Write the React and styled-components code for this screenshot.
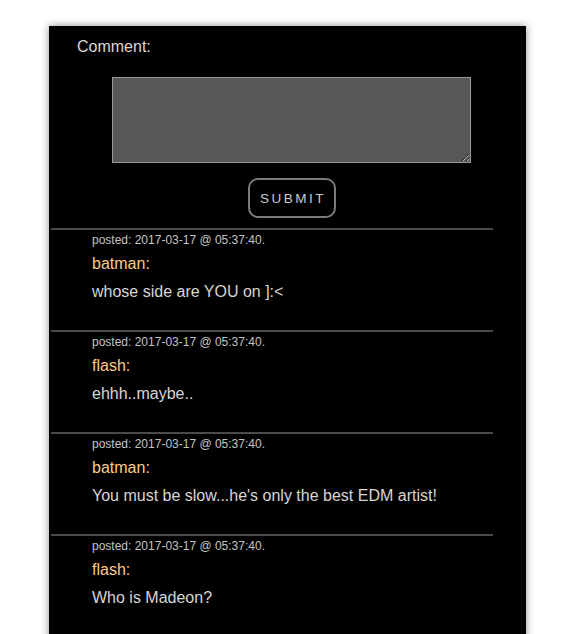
import React, { useState } from 'react';
import styled, { createGlobalStyle } from 'styled-components';

const GlobalStyle = createGlobalStyle`
  body {
    margin: 0;
    background: #ffffff;
    font-family: "Liberation Sans", Arial, sans-serif;
    overflow: hidden;
  }
`;

const Panel = styled.div`
  width: 477px;
  min-height: 620px;
  margin: 26px 0 0 49px;
  background: #000;
  box-shadow: 0 0 8px rgba(0, 0, 0, 0.45);
  padding-top: 12px;
  box-sizing: border-box;
`;

const Label = styled.div`
  padding-left: 28px;
  font-size: 16px;
  line-height: 18px;
  color: #d8d8d8;
`;

const FormArea = styled.div`
  display: flex;
  flex-direction: column;
  align-items: center;
  padding-left: 8px;
  margin-top: 21px;
`;

const TextBox = styled.textarea`
  display: block;
  width: 359px;
  height: 86px;
  box-sizing: border-box;
  background: #575757;
  border: 1px solid #9a9a9a;
  color: #eee;
  margin: 0;
  font-family: inherit;
`;

const SubmitButton = styled.button`
  margin: 15px 0 10px;
  width: 88px;
  height: 40px;
  box-sizing: border-box;
  background: transparent;
  border: 2px solid #7a7a7a;
  border-radius: 10px;
  color: #c8c8d0;
  font-family: inherit;
  font-size: 13.5px;
  letter-spacing: 2.5px;
  padding: 0 0 0 3px;
  cursor: pointer;
`;

const CommentList = styled.div`
  width: 442px;
  margin-left: 2px;
`;

const Comment = styled.div`
  border-top: 2px solid #4a4a4a;
  padding: 4px 0 29px 41px;
`;

const Posted = styled.div`
  font-size: 12px;
  line-height: 13px;
  color: #c4c4c4;
`;

const Author = styled.div`
  margin-top: 8px;
  font-size: 16px;
  line-height: 18px;
  color: #ffcb85;
`;

const Message = styled.div`
  margin-top: 10px;
  font-size: 16px;
  line-height: 18px;
  color: #d6d6d6;
`;

const comments = [
    { user: 'batman', text: 'whose side are YOU on ]:<' },
    { user: 'flash', text: 'ehhh..maybe..' },
    { user: 'batman', text: "You must be slow...he's only the best EDM artist!" },
    { user: 'flash', text: 'Who is Madeon?' },
];

const App = () => {
    const [draft, setDraft] = useState('');

    return (
        <>
            <GlobalStyle/>
            <Panel>
                <Label>Comment:</Label>
                <FormArea>
                    <TextBox value={draft} onChange={(e) => setDraft(e.target.value)}/>
                    <SubmitButton>SUBMIT</SubmitButton>
                </FormArea>
                <CommentList>
                    {comments.map((item, index) => (
                        <Comment key={`comment_${index}`}>
                            <Posted>posted: 2017-03-17 @ 05:37:40.</Posted>
                            <Author>{item.user}:</Author>
                            <Message>{item.text}</Message>
                        </Comment>
                    ))}
                </CommentList>
            </Panel>
        </>
    );
};

export default App;
